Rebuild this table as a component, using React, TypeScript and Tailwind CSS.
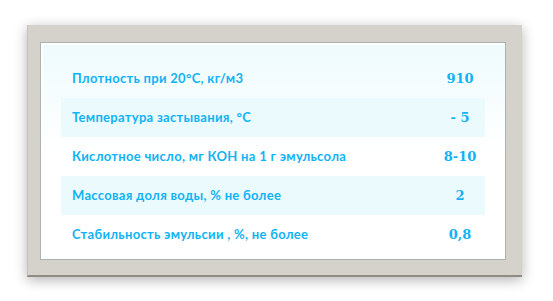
const rows = [
  { label: "Плотность при 20°C, кг/м3", value: "910" },
  { label: "Температура застывания, °C", value: "- 5" },
  { label: "Кислотное число, мг КОН на 1 г эмульсола", value: "8-10" },
  { label: "Массовая доля воды, % не более", value: "2" },
  { label: "Стабильность эмульсии , %, не более", value: "0,8" },
];

export default function App() {
  return (
    <div className="h-[301px] w-[553px] bg-white pl-[27px] pt-[25px]">
      <div className="h-[252px] w-[495px] border-b-2 border-l border-b-[#8f8c86] border-l-[#c4c1ba] bg-[#d5d2cb] pb-[15px] pl-[12px] pr-[16px] pt-[17px] shadow-[0_3px_12px_rgba(0,0,0,0.3)]">
        <div className="h-full w-full border border-[#aab3ad] bg-gradient-to-b from-[#eefbfd] via-white to-white px-[20px] pt-[16px] shadow-[inset_2px_2px_0_#ffffff]">
          <div className="flex flex-col">
            {rows.map((r, i) => (
              <div
                key={r.label}
                className={`flex h-[39px] items-center ${i % 2 === 1 ? "bg-[#ebfbfd]" : ""}`}
              >
                <span className="flex-1 pl-[11px] font-['Lato',sans-serif] text-[13px] font-bold tracking-[0.3px] text-[#10b3f5]">
                  {r.label}
                </span>
                <span className="w-[50px] text-center font-['DejaVu_Serif',serif] text-[13px] font-bold text-[#10b3f5]">
                  {r.value}
                </span>
              </div>
            ))}
          </div>
        </div>
      </div>
    </div>
  );
}
